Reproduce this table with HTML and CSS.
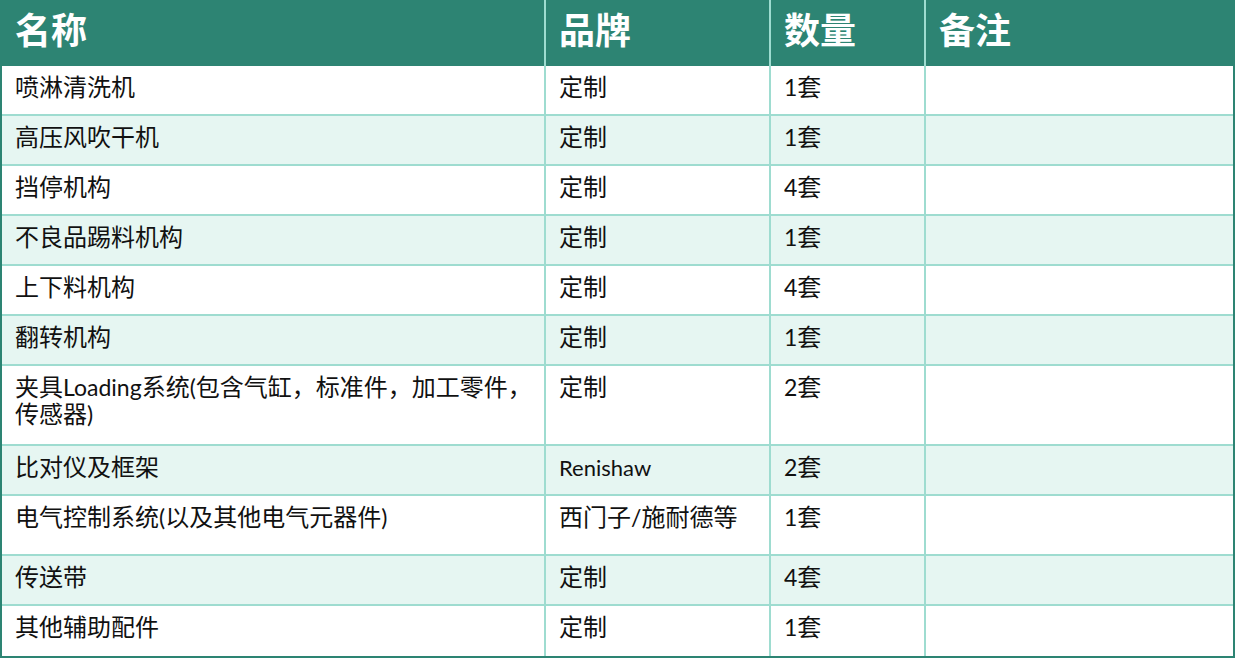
FILE: index.html
```html
<!DOCTYPE html>
<html lang="zh-CN">
<head>
<meta charset="utf-8">
<title>设备清单</title>
<link rel="stylesheet" href="styles.css">
</head>
<body>
<div class="sheet">
  <table class="grid">
    <thead>
      <tr class="head">
        <th class="c-name">名称</th>
        <th class="c-brand">品牌</th>
        <th class="c-qty">数量</th>
        <th class="c-note">备注</th>
      </tr>
    </thead>
    <tbody>
      <tr class="r-odd"><td>喷淋清洗机</td><td>定制</td><td><span class="lat">1</span>套</td><td></td></tr>
      <tr class="r-even"><td>高压风吹干机</td><td>定制</td><td><span class="lat">1</span>套</td><td></td></tr>
      <tr class="r-odd"><td>挡停机构</td><td>定制</td><td><span class="lat">4</span>套</td><td></td></tr>
      <tr class="r-even"><td>不良品踢料机构</td><td>定制</td><td><span class="lat">1</span>套</td><td></td></tr>
      <tr class="r-odd"><td>上下料机构</td><td>定制</td><td><span class="lat">4</span>套</td><td></td></tr>
      <tr class="r-even"><td>翻转机构</td><td>定制</td><td><span class="lat">1</span>套</td><td></td></tr>
      <tr class="r-odd r-tall"><td><span class="ln">夹具<span class="lat">Loading</span>系统<span class="lat">(</span>包含气缸，标准件，加工零件，</span><span class="ln">传感器<span class="lat">)</span></span></td><td>定制</td><td><span class="lat">2</span>套</td><td></td></tr>
      <tr class="r-even"><td>比对仪及框架</td><td><span class="lat small">Renishaw</span></td><td><span class="lat">2</span>套</td><td></td></tr>
      <tr class="r-odd r-mid"><td>电气控制系统<span class="lat">(</span>以及其他电气元器件<span class="lat">)</span></td><td>西门子<span class="lat">/</span>施耐德等</td><td><span class="lat">1</span>套</td><td></td></tr>
      <tr class="r-even"><td>传送带</td><td>定制</td><td><span class="lat">4</span>套</td><td></td></tr>
      <tr class="r-odd r-last"><td>其他辅助配件</td><td>定制</td><td><span class="lat">1</span>套</td><td></td></tr>
    </tbody>
  </table>
</div>
</body>
</html>
```

FILE: styles.css
```css
html, body {
  margin: 0;
  padding: 0;
  background: #ffffff;
}

.sheet {
  width: 1235px;
  height: 658px;
  box-sizing: border-box;
  border-left: 2px solid #2d8473;
  border-right: 2px solid #2d8473;
  border-bottom: 2px solid #2d8473;
  background: #ffffff;
  overflow: hidden;
}

.grid {
  width: 1231px;
  border-collapse: separate;
  border-spacing: 0;
  table-layout: fixed;
  font-family: "Noto Sans CJK SC", "Noto Sans", sans-serif;
  color: #111111;
}

.grid th,
.grid td {
  box-sizing: border-box;
  vertical-align: top;
  text-align: left;
  padding: 6px 10px 0 13px;
  border-right: 2px solid #9edcd0;
}

.grid th:last-child,
.grid td:last-child {
  border-right: none;
}

.c-name { width: 544px; }
.c-brand { width: 225px; }
.c-qty { width: 155px; }
.c-note { width: 307px; }

.head th {
  height: 66px;
  background: #2d8473;
  color: #ffffff;
  font-size: 36px;
  font-weight: 700;
  line-height: 44px;
  padding-top: 6px;
}

.grid td {
  height: 50px;
  font-size: 24px;
  line-height: 27px;
  border-bottom: 2px solid #9edcd0;
}

.ln {
  display: block;
  height: 27px;
}

.r-odd td { background: #ffffff; }
.r-even td { background: #e6f6f2; }

.r-tall td { height: 80px; }
.r-mid td { height: 60px; }
.r-last td { border-bottom: none; height: 50px; }

.lat {
  font-family: "Lato", "Noto Sans CJK SC", sans-serif;
  font-size: 23px;
}

.lat.small {
  font-size: 22px;
}
```
